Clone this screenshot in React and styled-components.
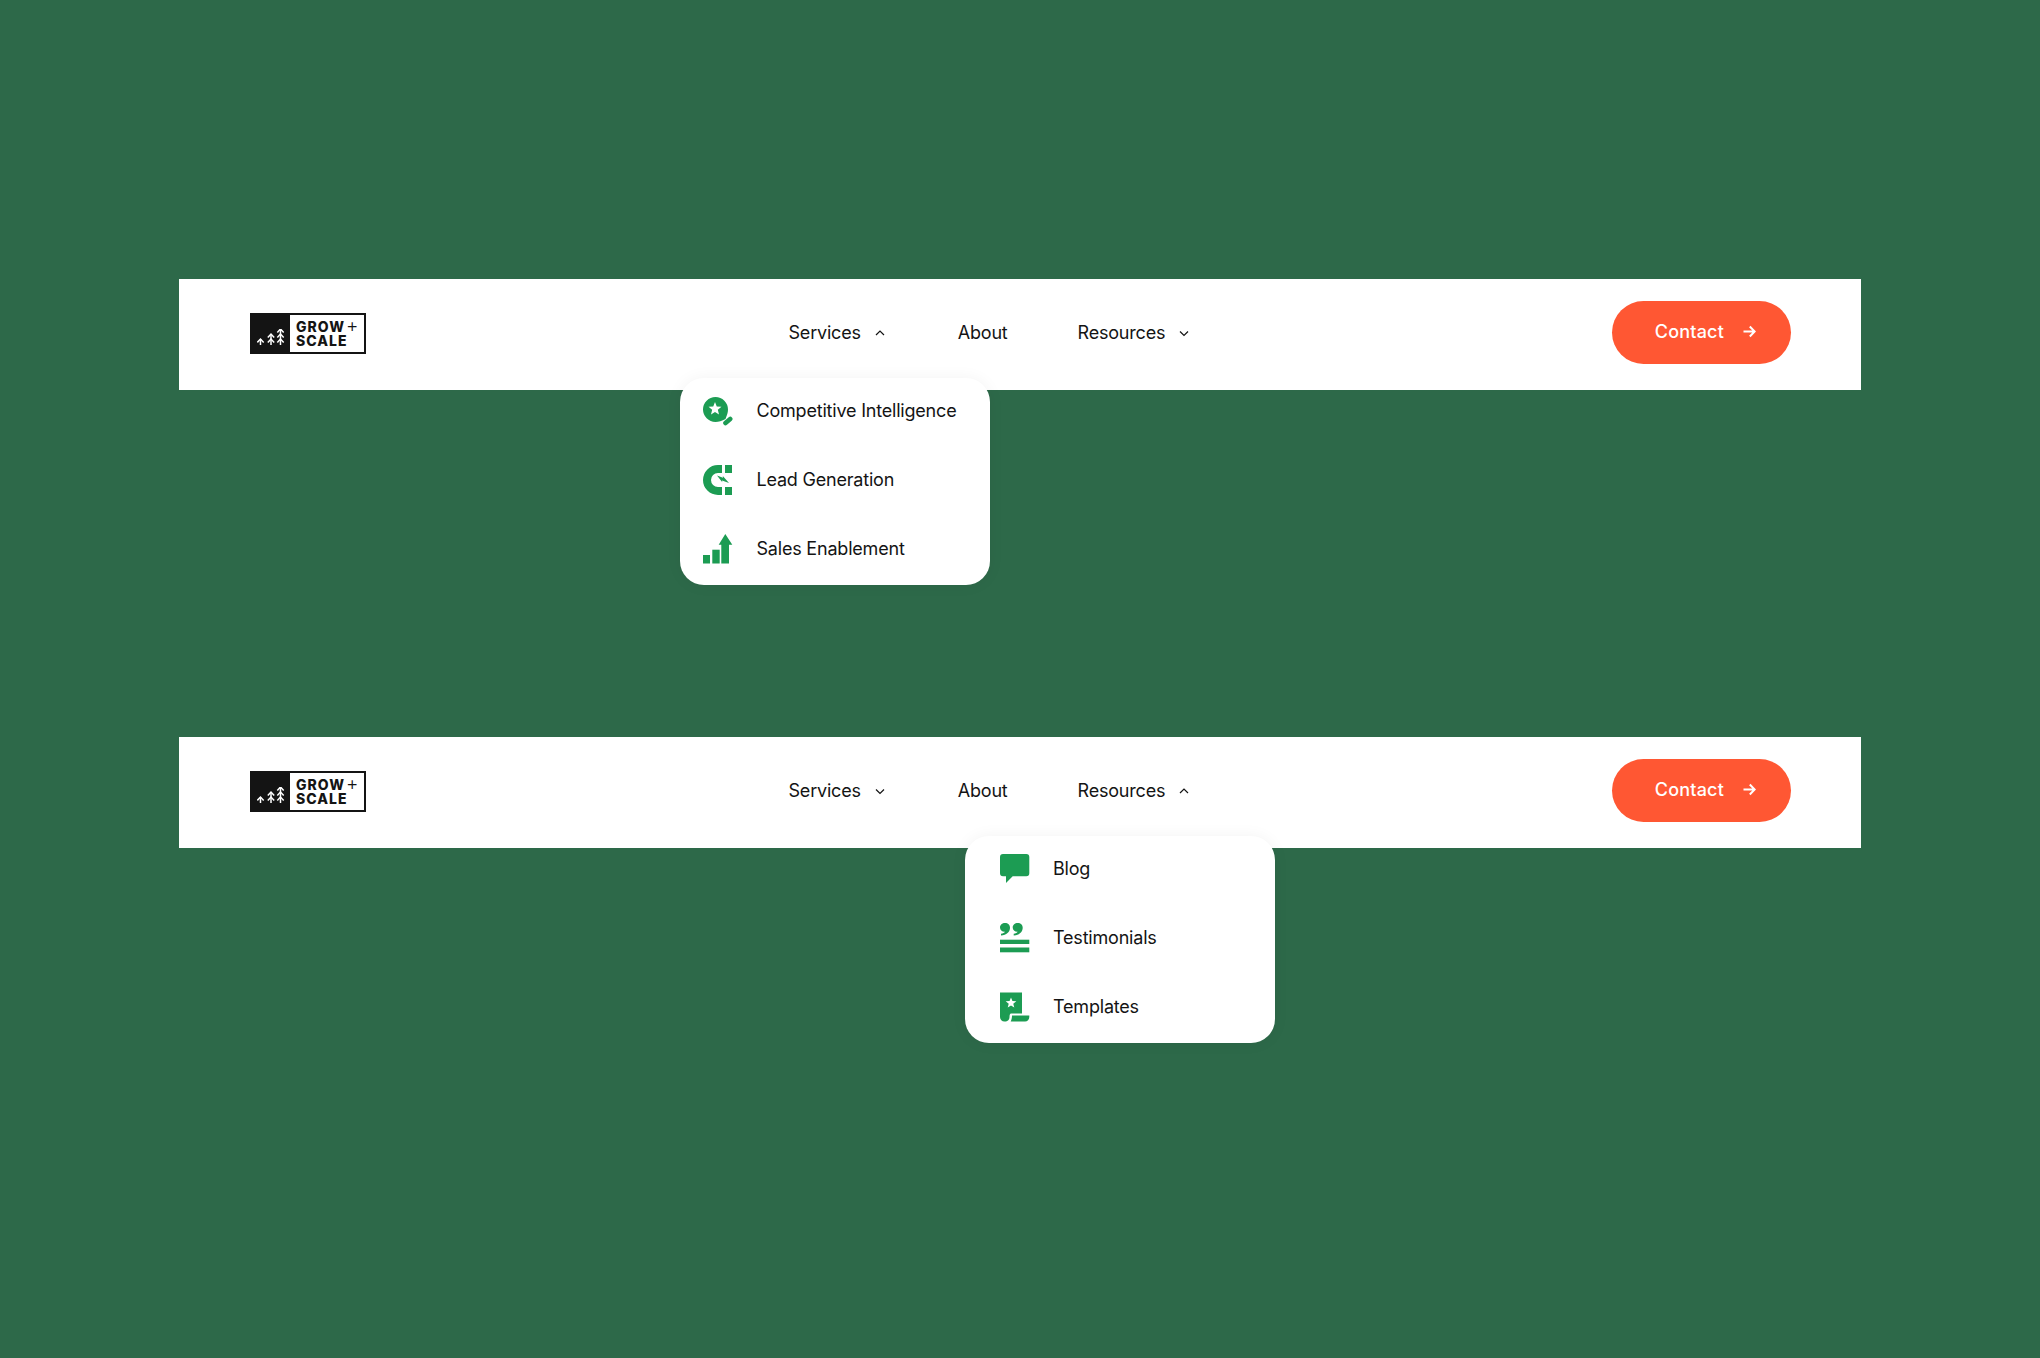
import React from 'react';
import styled, { createGlobalStyle } from 'styled-components';

const GlobalStyle = createGlobalStyle`
  html, body {
    margin: 0;
    padding: 0;
    background: #2D6949;
  }
  * {
    box-sizing: border-box;
  }
`;

const Page = styled.div`
  min-height: 1358px;
  padding: 279px 179px 0;
  display: flex;
  flex-direction: column;
  gap: 347px;
  font-family: Inter, "Liberation Sans", sans-serif;
  letter-spacing: -0.2px;
  color: #141414;
`;

const Bar = styled.header`
  height: 111px;
  padding: 0 70px 4px 71px;
  background: #fff;
  display: flex;
  align-items: center;
  justify-content: space-between;
`;

const Logo = styled.div`
  width: 116px;
  height: 41px;
  margin-top: 2px;
  border: 2px solid #141414;
  display: flex;
  background: #fff;
`;

const LogoMark = styled.div`
  width: 38px;
  background: #141414;
  display: flex;
  align-items: flex-end;
  justify-content: center;
  padding-bottom: 6px;
`;

const LogoText = styled.div`
  padding: 4px 0 0 6px;
  font-size: 14px;
  font-weight: 800;
  line-height: 14px;
  letter-spacing: 1px;
  color: #141414;
  white-space: nowrap;
`;

const LogoPlus = styled.span`
  font-weight: 300;
  font-size: 19px;
  line-height: 14px;
  letter-spacing: 0;
  margin-left: 1px;
`;

const Nav = styled.nav`
  margin-left: 3px;
  display: flex;
  align-items: center;
  gap: 70px;
`;

const NavItem = styled.div`
  position: relative;
  display: flex;
  align-items: center;
  gap: 11px;
  font-size: 18px;
  line-height: 24px;
  white-space: nowrap;
`;

const Menu = styled.div`
  position: absolute;
  z-index: 2;
  top: 57px;
  left: ${props => props.$left}px;
  width: 310px;
  height: 207px;
  padding-left: ${props => props.$inset}px;
  background: #fff;
  border-radius: 24px;
  box-shadow: 0 0 16px rgba(0, 0, 0, 0.05);
  display: flex;
  flex-direction: column;
`;

const MenuRow = styled.div`
  height: 69px;
  padding-bottom: 3px;
  display: flex;
  align-items: center;
  gap: ${props => props.$gap}px;
  font-size: 18px;
`;

const IconBox = styled.svg`
  width: 30px;
  height: 30px;
  flex: none;
  fill: #1C9C53;
`;

const ContactButton = styled.button`
  height: 63px;
  padding: 0 35px 2px 43px;
  border: none;
  border-radius: 32px;
  background: #FF5733;
  color: #fff;
  font-family: Inter, sans-serif;
  font-size: 18px;
  font-weight: 500;
  letter-spacing: 0.2px;
  display: flex;
  align-items: center;
  gap: 19px;
  cursor: pointer;
`;

const star = (cx, cy, R, r) => {
  const pts = [];
  for (let i = 0; i < 10; i++) {
    const rad = i % 2 ? r : R;
    const a = (Math.PI / 5) * i - Math.PI / 2;
    pts.push(`${(cx + rad * Math.cos(a)).toFixed(2)},${(cy + rad * Math.sin(a)).toFixed(2)}`);
  }
  return pts.join(' ');
};

const Chevron = ({ up }) => (
  <svg width="16" height="16" viewBox="0 0 16 16" fill="none" stroke="#141414" strokeWidth="1.2">
    <path d={up ? 'M4 10l4-4 4 4' : 'M4 6.5l4 4 4-4'} />
  </svg>
);

const Tree = ({ x, levels }) => {
  const top = 16 - levels * 5 - 1;
  return (
    <g>
      <path d={`M${x} ${top}V16`} />
      {Array.from({ length: levels }).map((_, i) => (
        <path key={i} d={`M${x - 3.2} ${top + 3.4 + i * 5}L${x} ${top + i * 5}L${x + 3.2} ${top + 3.4 + i * 5}`} />
      ))}
    </g>
  );
};

const GrowLogo = () => (
  <Logo>
    <LogoMark>
      <svg width="29" height="17" viewBox="0 0 29 17" fill="none" stroke="#fff" strokeWidth="1.5">
        <Tree x={3.5} levels={1} />
        <Tree x={14} levels={2} />
        <Tree x={23.5} levels={3} />
      </svg>
    </LogoMark>
    <LogoText>
      GROW<LogoPlus>+</LogoPlus>
      <br />
      SCALE
    </LogoText>
  </Logo>
);

const SearchStarIcon = () => (
  <IconBox viewBox="0 0 30 30">
    <path d="M12.500 1A12.500 12.500 0 0 1 25 13.500C25 16.500 24 19 22.500 23C19 25 15.500 25.800 12.500 26A12.500 12.500 0 1 1 12.500 1Z" />
    <polygon points={star(12, 12.9, 6.8, 3)} fill="#fff" />
    <path d="M22.500 27L27.200 23" fill="none" stroke="#1C9C53" strokeWidth="4.600" strokeLinecap="round" />
  </IconBox>
);

const MagnetIcon = () => (
  <IconBox viewBox="0 0 30 30">
    <path d="M15 0H19V8H15A7 7 0 0 0 15 22H19V30H15A15 15 0 0 1 15 0Z" />
    <rect x="22" y="0" width="7" height="8" />
    <rect x="22" y="22" width="7" height="8" />
    <polygon points="14,10.500 20,12.800 19.800,11 26,18 19,15.500 19.300,17.200" />
  </IconBox>
);

const GrowthIcon = () => (
  <IconBox viewBox="0 0 30 30">
    <rect x="0" y="21" width="7" height="8.500" />
    <rect x="9.300" y="15.700" width="7.400" height="13.800" />
    <polygon points="22.300,0 29.300,10.700 26,10.700 26,29.500 18.300,29.500 18.300,10.700 15.700,10.700" />
  </IconBox>
);

const ChatIcon = () => (
  <IconBox viewBox="0 0 30 30">
    <path d="M3 0H26.300A3 3 0 0 1 29.300 3V19.300A3 3 0 0 1 26.300 22.300H12.700L6 29V22.300H3A3 3 0 0 1 0 19.300V3A3 3 0 0 1 3 0Z" />
  </IconBox>
);

const QuoteIcon = () => (
  <IconBox viewBox="0 0 30 30">
    <path d="M0 4.500C0 2 2.200 0 5 0C8 0 10 2 10 4.800C10 9 6.500 12.300 1 12.500V10.800C3 10.500 4.400 9.800 5 8.800C2.200 9 0 7.200 0 4.500Z" />
    <path d="M12.700 4.500C12.700 2 14.900 0 17.700 0C20.700 0 22.700 2 22.700 4.800C22.700 9 19.200 12.300 13.700 12.500V10.800C15.700 10.500 17.100 9.800 17.700 8.800C14.900 9 12.700 7.200 12.700 4.500Z" />
    <rect x="0" y="16.700" width="29.300" height="4.300" />
    <rect x="0" y="24.500" width="29.300" height="4.800" />
  </IconBox>
);

const TemplateIcon = () => (
  <IconBox viewBox="0 0 30 30">
    <path d="M0 0.500H22V21.500H11C10 21.500 9.500 23 9.500 25C9.500 27.500 8 29.500 4.500 29.500C2 29.500 0 27.500 0 25Z" />
    <polygon points={star(11, 11, 5.6, 2.4)} fill="#fff" />
    <path d="M12 23.500H29.300V25C29.300 27.500 27.500 29.500 25 29.500H10.700C11.500 28 12 26 12 23.500Z" />
  </IconBox>
);

const ArrowIcon = () => (
  <svg width="13" height="13" viewBox="0 0 13 13" fill="none" stroke="#fff" strokeWidth="2">
    <path d="M0.500 6.500H11.500M6.800 1.500L11.700 6.500L6.800 11.500" />
  </svg>
);

const menus = {
  Services: {
    left: -108.5,
    inset: 23,
    gap: 23.5,
    items: [
      { label: 'Competitive Intelligence', icon: <SearchStarIcon /> },
      { label: 'Lead Generation', icon: <MagnetIcon /> },
      { label: 'Sales Enablement', icon: <GrowthIcon /> },
    ],
  },
  Resources: {
    left: -112.5,
    inset: 35,
    gap: 23,
    items: [
      { label: 'Blog', icon: <ChatIcon /> },
      { label: 'Testimonials', icon: <QuoteIcon /> },
      { label: 'Templates', icon: <TemplateIcon /> },
    ],
  },
};

const NavMenu = ({ label, open }) => {
  const menu = menus[label];
  return (
    <NavItem>
      <span>{label}</span>
      <Chevron up={open} />
      {open && (
        <Menu $left={menu.left} $inset={menu.inset}>
          {menu.items.map(item => (
            <MenuRow key={item.label} $gap={menu.gap}>
              {item.icon}
              <span>{item.label}</span>
            </MenuRow>
          ))}
        </Menu>
      )}
    </NavItem>
  );
};

const NavBar = ({ openMenu }) => (
  <Bar>
    <GrowLogo />
    <Nav>
      <NavMenu label="Services" open={openMenu === 'Services'} />
      <NavItem>About</NavItem>
      <NavMenu label="Resources" open={openMenu === 'Resources'} />
    </Nav>
    <ContactButton>
      Contact
      <ArrowIcon />
    </ContactButton>
  </Bar>
);

export default function App() {
  return (
    <>
      <GlobalStyle />
      <Page>
        <NavBar openMenu="Services" />
        <NavBar openMenu="Resources" />
      </Page>
    </>
  );
}
